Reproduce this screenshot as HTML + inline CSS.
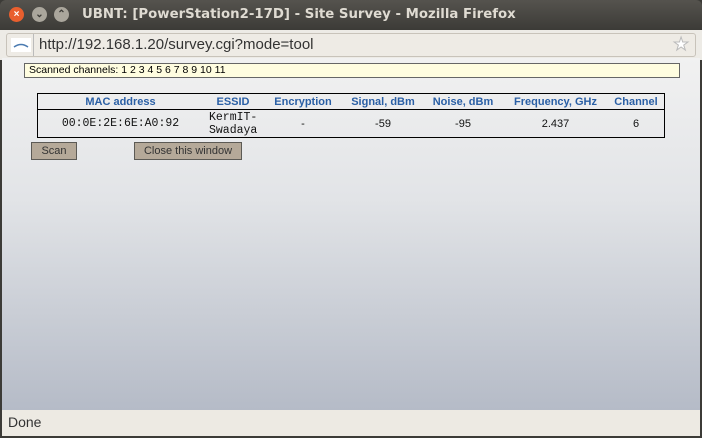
<!DOCTYPE html><html><head><style>
body{margin:0;width:702px;height:438px;overflow:hidden;font-family:"Liberation Sans",sans-serif;position:relative;background:#3c3b37}
.title{position:absolute;left:0;top:0;width:702px;height:30px;background:linear-gradient(#55534e,#3c3b37);border-radius:6px 6px 0 0}
.title .t{position:absolute;left:82px;top:7px;color:#dfdbd2;font-weight:bold;font-size:13.3px;font-family:"DejaVu Sans",sans-serif}
.btn{position:absolute;top:7px;width:15px;height:15px;border-radius:50%;background:#aaa69c;color:#3c3b37;font-size:10px;text-align:center;line-height:15px;font-weight:bold}
.nav{position:absolute;left:0;top:30px;width:702px;height:30px;background:#edebe6}
.url{position:absolute;left:6px;top:33px;width:688px;height:22px;background:#eeebe5;border:1px solid #c8c3ba;border-radius:3px}
.url span{position:absolute;left:32px;top:2px;font-size:15px;color:#333}
.content{position:absolute;left:2px;top:58px;width:698px;height:352px;background:linear-gradient(#f1f1f1 0%,#e2e4e7 40%,#b5bbc7 100%)}
.scan{position:absolute;left:24px;top:63px;width:650px;height:13px;background:#fffde0;border:1px solid #666;font-size:10.5px;line-height:13px;padding-left:4px}
table{position:absolute;left:37px;top:93px;width:628px;border:1px solid #000;border-collapse:collapse;font-size:11px}
th{color:#2a5fa5;font-weight:bold;height:15px;border-bottom:1px solid #000;padding:0}
td{text-align:center;height:27px;padding:0;color:#111}
.mono{font-family:"Liberation Mono",monospace;font-size:11.5px}
.b{position:absolute;top:142px;height:16px;background:#b5a999;border:1px solid #5c5a55;font-size:11px;color:#333;text-align:center;line-height:16px}
.status{position:absolute;left:2px;top:410px;width:698px;height:26px;background:#edeae3;font-size:14px;color:#333}
</style></head><body>
<div class="title"><div class="btn" style="left:9px;background:#e95f2e;color:#fff">×</div><div class="btn" style="left:32px">⌄</div><div class="btn" style="left:54px">⌃</div><div class="t">UBNT: [PowerStation2-17D] - Site Survey - Mozilla Firefox</div></div>
<div class="nav"></div>
<div class="url"><svg style="position:absolute;left:4px;top:4px" width="20" height="14"><rect width="20" height="14" fill="#fff"/><path d="M3 9 Q10 4 17 9" stroke="#4a7ab0" stroke-width="1.5" fill="none"/></svg><div style="position:absolute;left:26px;top:0;width:1px;height:22px;background:#bbb"></div><span>http://192.168.1.20/survey.cgi?mode=tool</span><span style="left:666px;top:0;color:#fff;font-size:18px;-webkit-text-stroke:1px #bbb">★</span></div>
<div class="content"></div>
<div class="scan">Scanned channels: 1 2 3 4 5 6 7 8 9 10 11</div>
<table><tr><th style="width:165px">MAC address</th><th style="width:60px">ESSID</th><th style="width:80px">Encryption</th><th style="width:80px">Signal, dBm</th><th style="width:80px">Noise, dBm</th><th style="width:105px">Frequency, GHz</th><th>Channel</th></tr>
<tr><td class="mono">00:0E:2E:6E:A0:92</td><td class="mono" style="text-align:left;padding-left:6px;line-height:13px">KermIT-<br>Swadaya</td><td>-</td><td>-59</td><td>-95</td><td>2.437</td><td>6</td></tr></table>
<div class="b" style="left:31px;width:44px">Scan</div>
<div class="b" style="left:134px;width:106px">Close this window</div>
<div class="status"><span style="position:absolute;left:6px;top:4px">Done</span></div>
</body></html>
